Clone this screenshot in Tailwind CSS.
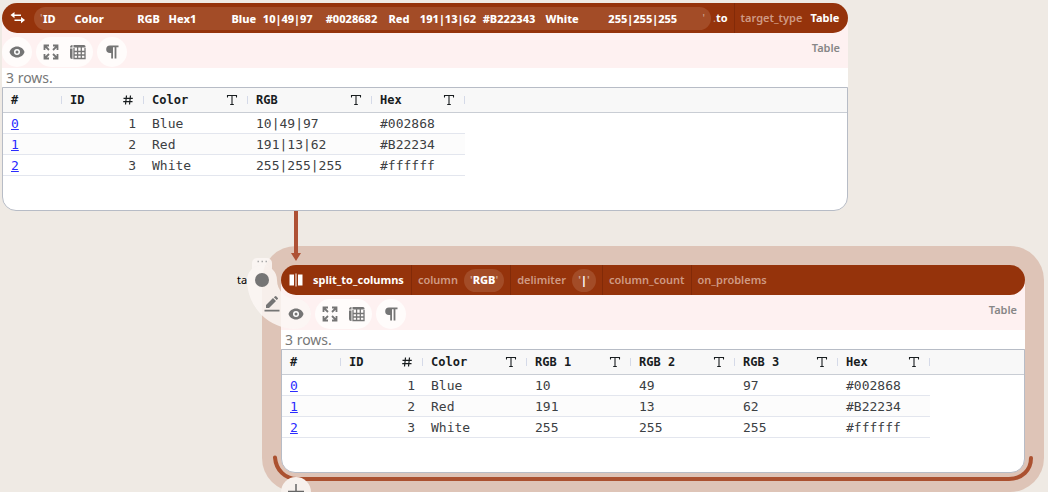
<!DOCTYPE html>
<html lang="en">
<head>
<meta charset="utf-8">
<title>Component graph</title>
<script src="https://cdn.jsdelivr.net/npm/@tailwindcss/browser@4"></script>
</head>
<body class="bg-[#efeae4] font-['Noto_Sans','Open_Sans',sans-serif]">
<svg class="hidden" aria-hidden="true">
  <symbol id="eye" viewBox="0 0 16 16"><path d="M8 2.500C4.400 2.500 1.500 4.800 .500 8c1 3.200 3.900 5.500 7.500 5.500s6.500-2.300 7.500-5.500C14.500 4.800 11.600 2.500 8 2.500z" fill="currentColor"/><circle cx="8" cy="8" r="3" fill="#fff"/><circle cx="8" cy="8" r="1.500" fill="currentColor"/></symbol>
  <symbol id="expand" viewBox="0 0 16 16"><path d="M1.500 6V1.500H6M10 1.500h4.500V6M14.500 10v4.500H10M6 14.500H1.500V10M2 2l4 4M14 2l-4 4M14 14l-4-4M2 14l4-4" fill="none" stroke="currentColor" stroke-width="1.800"/></symbol>
  <symbol id="grid" viewBox="0 0 16 16"><path d="M0 4.500h2.500V15H2a2 2 0 0 1-2-2zM0 3.500A2.500 2.500 0 0 1 2.500 1v2.500zM3.500 1H14a1.500 1.500 0 0 1 1.500 1.500v1h-12z" fill="currentColor"/><path d="M4 4v10.500h11V4M4 7.500h11M4 11h11M7.600 3v11.500M11.300 3v11.500" fill="none" stroke="currentColor" stroke-width="1.300"/></symbol>
  <symbol id="para" viewBox="0 0 16 16"><path d="M14.500 1.500H6a3.800 3.800 0 0 0 0 7.600h1.200v5.400H9V3.200h1.600v11.300h1.800V3.200h2.100z" fill="currentColor"/></symbol>
  <symbol id="text" viewBox="0 0 12 12"><path d="M1.500 3.500v-2h9v2M6 1.500v9M4.200 10.500h3.600" fill="none" stroke="currentColor" stroke-width="1.100"/></symbol>
  <symbol id="number" viewBox="0 0 12 12"><path d="M4.500 1.500l-1 9M8.500 1.500l-1 9M1.500 4.300h9.300M1.200 7.700h9.300" fill="none" stroke="currentColor" stroke-width="1.200"/></symbol>
</svg>
<main class="relative min-h-screen overflow-hidden">

  <!-- selection halo of the second component -->
  <div class="absolute left-[262px] top-[246px] h-[246px] w-[782px] rounded-[34px] bg-[#dec4b7]"></div>

  <section class="absolute left-[2px] top-[3px] w-[846px]">
    <div class="bg-linear-to-b from-transparent from-50% to-[#fef1f1] to-50%">
      <header class="flex h-[30px] items-center rounded-full bg-[#95330b] text-[11px] font-bold text-white">
        <svg class="mx-2 h-4 w-4 shrink-0" viewBox="0 0 16 16"><path d="M4.500 2v2.400H11v1.500H4.500v2.300L.500 5.100zM11 7v2.400H4.500v1.500H11v2.300l4-3.100z" fill="#fff"/></svg>
        <div class="flex h-[23px] w-[677px] items-center rounded-full bg-[#a34c27] px-1.5 font-extrabold whitespace-nowrap">
          <span class="w-[3px] font-normal text-white/50">'</span>
          <div class="grid w-[660px] grid-cols-21 pt-0.5 leading-4">
            <span>ID</span><span class="col-span-2">Color</span><span>RGB</span><span class="col-span-2">Hex1</span><span>Blue</span><span class="col-span-2">10|49|97</span><span class="col-span-2">#0028682</span><span>Red</span><span class="col-span-2">191|13|62</span><span class="col-span-2">#B222343</span><span class="col-span-2">White</span><span class="col-span-3">255|255|255</span>
          </div>
          <span class="font-normal text-white/50">'</span>
        </div>
        <span class="pl-0.5 font-normal text-white/50">.</span>
        <span class="pr-1.5">to</span>
        <div class="flex h-full flex-1 items-center gap-2 border-l border-[#822a08] px-1.5">
          <span class="font-semibold text-[#cf9a84]">target_type</span>
          <span>Table</span>
        </div>
      </header>
    </div>
    <div class="flex h-[35px] items-end gap-1 bg-[#fef1f1] pb-px text-[#757575]">
      <button aria-label="Visualization" class="flex size-[30px] items-center justify-center rounded-full bg-[#fffcfb]"><svg class="size-4"><use href="#eye"/></svg></button>
      <div class="flex h-[30px] w-[57px] items-center justify-center gap-[11px] rounded-full bg-[#fffcfb]">
        <button aria-label="Fullscreen"><svg class="size-4"><use href="#expand"/></svg></button>
        <button aria-label="Table view"><svg class="size-4"><use href="#grid"/></svg></button>
      </div>
      <button aria-label="Show formatting" class="flex size-[30px] items-center justify-center rounded-full bg-[#fffcfb]"><svg class="size-4"><use href="#para"/></svg></button>
      <span class="ml-auto self-start pr-2 pt-1.5 text-[11px] leading-[18px] font-semibold text-[#878787]">Table</span>
    </div>
    <p class="h-[19px] bg-white px-1 text-[14px] leading-5 text-[#777]">3 rows.</p>
    <div class="h-[124px] overflow-hidden rounded-b-[14px] border border-[#b7bcc6] bg-white">
      <table class="w-full table-fixed border-separate border-spacing-0 text-left font-['DejaVu_Sans_Mono','Liberation_Mono',monospace] text-[13px] leading-[18px] text-[#3c4043]">
        <colgroup><col class="w-[59px]"><col class="w-[82px]"><col class="w-[104px]"><col class="w-[124px]"><col class="w-[93px]"><col></colgroup>
        <thead class="bg-[#f8f8f8] text-xs text-[#181d1f] [&_th]:h-[25px] [&_th]:border-b [&_th]:border-[#c9cdd4] [&_th]:p-0 [&_th>div]:flex [&_th>div]:items-center [&_th>div]:justify-between [&_th>div]:pl-2 [&_th>div]:pr-[9px] [&_th>div]:h-2 [&_th>div]:border-r [&_th>div]:border-[#d5dae8]">
          <tr>
            <th><div>#</div></th>
            <th><div>ID<svg class="size-3"><use href="#number"/></svg></div></th>
            <th><div>Color<svg class="size-3"><use href="#text"/></svg></div></th>
            <th><div>RGB<svg class="size-3"><use href="#text"/></svg></div></th>
            <th><div>Hex<svg class="size-3"><use href="#text"/></svg></div></th>
            <th></th>
          </tr>
        </thead>
        <tbody class="[&_td]:border-b [&_td]:border-[#e3e6ee] [&_td]:px-2 [&_td]:pt-0.5 [&_td]:pb-0 [&_td:last-child]:border-0 [&_td:last-child]:bg-white">
          <tr><td><a href="#0" class="text-[#2b2bff] underline">0</a></td><td class="text-right">1</td><td>Blue</td><td>10|49|97</td><td>#002868</td><td></td></tr>
          <tr class="bg-[#fcfcfc]"><td><a href="#1" class="text-[#2b2bff] underline">1</a></td><td class="text-right">2</td><td>Red</td><td>191|13|62</td><td>#B22234</td><td></td></tr>
          <tr><td><a href="#2" class="text-[#2b2bff] underline">2</a></td><td class="text-right">3</td><td>White</td><td>255|255|255</td><td>#ffffff</td><td></td></tr>
        </tbody>
      </table>
    </div>
  </section>

  <!-- connection between the components -->
  <svg class="absolute left-[290px] top-[211px] h-[51px] w-3" viewBox="0 0 12 51"><path d="M4 0h4v42h3L6 50 1 42h3z" fill="#ae5135"/></svg>

  <p class="absolute left-[237px] top-[272px] text-[11px] leading-4 text-black">ta</p>

  <section class="absolute left-[281px] top-[265px] w-[744px]">
    <div class="bg-linear-to-b from-transparent from-50% to-[#fef1f1] to-50%">
      <header class="relative z-10 flex h-[30px] items-center rounded-full bg-[#95330b] text-[11px] font-semibold text-[#cf9a84] whitespace-nowrap">
        <svg class="mx-[7px] h-4 w-4 shrink-0" viewBox="0 0 16 16"><path d="M1.500 2.500h4.500v11H1.500zM10 2.500h4.500v11H10zM7.500 1.500h1v13h-1z" fill="#fff"/></svg>
        <span class="pl-0.5 pr-[7px] font-bold text-white">split_to_columns</span>
        <div class="flex h-full items-center gap-1.5 border-l border-[#822a08] px-1.5">
          <span>column</span>
          <span class="flex h-[23px] items-center rounded-full bg-[#a34c27] px-1.5"><span class="text-white/50">'</span><b class="font-extrabold text-white">RGB</b><span class="text-white/50">'</span></span>
        </div>
        <div class="flex h-full items-center gap-1.5 border-l border-[#822a08] px-1.5">
          <span>delimiter</span>
          <span class="flex h-[23px] w-6 items-center justify-center rounded-full bg-[#a34c27]"><span class="text-white/50">'</span><b class="font-extrabold text-white">|</b><span class="text-white/50">'</span></span>
        </div>
        <div class="flex h-full items-center border-l border-[#822a08] px-1.5">column_count</div>
        <div class="flex h-full items-center border-l border-[#822a08] px-1.5">on_problems</div>
      </header>
    </div>
    <div class="flex h-[35px] items-end gap-1 bg-[#fef1f1] pb-px text-[#757575]">
      <button aria-label="Visualization" class="relative z-10 flex size-[30px] items-center justify-center rounded-full"><svg class="size-4"><use href="#eye"/></svg></button>
      <div class="flex h-[30px] w-[57px] items-center justify-center gap-[11px] rounded-full bg-[#fffcfb]">
        <button aria-label="Fullscreen"><svg class="size-4"><use href="#expand"/></svg></button>
        <button aria-label="Table view"><svg class="size-4"><use href="#grid"/></svg></button>
      </div>
      <button aria-label="Show formatting" class="flex size-[30px] items-center justify-center rounded-full bg-[#fffcfb]"><svg class="size-4"><use href="#para"/></svg></button>
      <span class="ml-auto self-start pr-2 pt-1.5 text-[11px] leading-[18px] font-semibold text-[#878787]">Table</span>
    </div>
    <p class="h-[19px] bg-white px-1 text-[14px] leading-5 text-[#777]">3 rows.</p>
    <div class="h-[124px] overflow-hidden rounded-b-[14px] border border-[#b7bcc6] bg-white">
      <table class="w-full table-fixed border-separate border-spacing-0 text-left font-['DejaVu_Sans_Mono','Liberation_Mono',monospace] text-[13px] leading-[18px] text-[#3c4043]">
        <colgroup><col class="w-[59px]"><col class="w-[82px]"><col class="w-[104px]"><col class="w-[104px]"><col class="w-[104px]"><col class="w-[103px]"><col class="w-[92px]"><col></colgroup>
        <thead class="bg-[#f8f8f8] text-xs text-[#181d1f] [&_th]:h-[25px] [&_th]:border-b [&_th]:border-[#c9cdd4] [&_th]:p-0 [&_th>div]:flex [&_th>div]:items-center [&_th>div]:justify-between [&_th>div]:pl-2 [&_th>div]:pr-[9px] [&_th>div]:h-2 [&_th>div]:border-r [&_th>div]:border-[#d5dae8]">
          <tr>
            <th><div>#</div></th>
            <th><div>ID<svg class="size-3"><use href="#number"/></svg></div></th>
            <th><div>Color<svg class="size-3"><use href="#text"/></svg></div></th>
            <th><div>RGB 1<svg class="size-3"><use href="#text"/></svg></div></th>
            <th><div>RGB 2<svg class="size-3"><use href="#text"/></svg></div></th>
            <th><div>RGB 3<svg class="size-3"><use href="#text"/></svg></div></th>
            <th><div>Hex<svg class="size-3"><use href="#text"/></svg></div></th>
            <th></th>
          </tr>
        </thead>
        <tbody class="[&_td]:border-b [&_td]:border-[#e3e6ee] [&_td]:px-2 [&_td]:pt-0.5 [&_td]:pb-0 [&_td:last-child]:border-0 [&_td:last-child]:bg-white">
          <tr><td><a href="#0" class="text-[#2b2bff] underline">0</a></td><td class="text-right">1</td><td>Blue</td><td>10</td><td>49</td><td>97</td><td>#002868</td><td></td></tr>
          <tr class="bg-[#fcfcfc]"><td><a href="#1" class="text-[#2b2bff] underline">1</a></td><td class="text-right">2</td><td>Red</td><td>191</td><td>13</td><td>62</td><td>#B22234</td><td></td></tr>
          <tr><td><a href="#2" class="text-[#2b2bff] underline">2</a></td><td class="text-right">3</td><td>White</td><td>255</td><td>255</td><td>255</td><td>#ffffff</td><td></td></tr>
        </tbody>
      </table>
    </div>

    <!-- circular menu -->
    <svg class="absolute -left-[34px] -top-[8px] h-[74px] w-[66px]" viewBox="247 257 66 74">
      <g fill="#fbf7f4" fill-opacity=".85">
        <path d="M252 270v-7a5 5 0 0 1 5-5h10a5 5 0 0 1 5 5v6.200A15 15 0 0 0 252 269z"/>
        <path d="M247 280A15 15 0 0 1 277 280A19 19 0 0 0 296 299A15 15 0 0 1 296 329A49 49 0 0 1 247 280z"/>
      </g>
      <path d="M257.500 261.500h1.500M261.500 261.500h1.500M265.500 261.500h1.500" stroke="#aaa" stroke-width="1.500"/>
    </svg>
    <button aria-label="Pick color" class="absolute -left-[26px] top-[8px] size-[14px] rounded-full bg-[#757575]"></button>
    <button aria-label="Edit" class="absolute -left-[17px] top-[31px] text-[#757575]"><svg class="size-4" viewBox="0 0 16 16"><path d="M2 12V9L9 2l3 3-7 7zM9.800 1.200l1.400-1q.600-.300 1 .100l1.600 1.600q.500.500 0 1l-1.100 1.100zM.500 13.800h15v1.700H.500z" fill="currentColor"/></svg></button>
  </section>

  <!-- output port of the selected component -->
  <svg class="absolute left-[272px] top-[454px] h-[28px] w-[762px]" viewBox="272 454 762 28"><path d="M275 457.500C276 470 285 479 297 479H1009C1022 479 1031 470 1031 458" fill="none" stroke="#ab5130" stroke-width="4" stroke-linecap="round"/></svg>
  <button aria-label="Add component" class="absolute left-[281px] top-[477px] size-[30px] rounded-full bg-[#f7f1ed] text-[#666]"><svg class="size-[30px]" viewBox="0 0 30 30"><path d="M15 7v16M7 14.500h16" stroke="currentColor" stroke-width="1.500"/></svg></button>
</main>
</body>
</html>
